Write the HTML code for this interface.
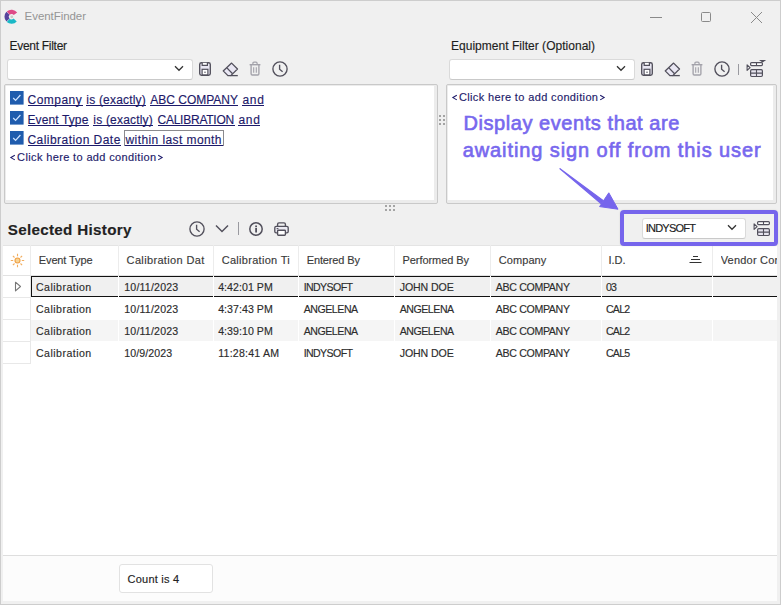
<!DOCTYPE html>
<html><head><meta charset="utf-8">
<style>
*{box-sizing:border-box;margin:0;padding:0}
html,body{width:781px;height:605px;overflow:hidden;background:#f0f0f0;font-family:"Liberation Sans",sans-serif}
.a{position:absolute;white-space:nowrap;line-height:normal}
div.a{-webkit-text-stroke:0.15px currentColor}
svg.a{overflow:visible}
</style></head><body>
<div class="a" style="left:0px;top:0px;width:781px;height:605px;background:#f0f0f0;border:1px solid #cdcdcd;"></div>
<svg class="a" style="left:2px;top:6px" width="20" height="20" viewBox="0 0 20 20"><path d="M6.22 7.06 A4.9 4.9 0 0 1 13.46 7.82" stroke="#de4a86" stroke-width="4.3" fill="none"/><path d="M5.98 7.30 A4.9 4.9 0 0 0 5.98 14.10" stroke="#56449c" stroke-width="4.3" fill="none"/><path d="M6.22 14.34 A4.9 4.9 0 0 0 13.14 13.98" stroke="#1ab8c6" stroke-width="4.3" fill="none"/><circle cx="9.8" cy="10.8" r="1.4" fill="#c9ccc5"/></svg>
<div class="a " style="left:24.60px;top:10.01px;font-size:11.5px;color:#959595;letter-spacing:-0.061px;-webkit-text-stroke:0;">EventFinder</div>
<div class="a" style="left:650px;top:17px;width:12px;height:1px;background:#8a8a8a;"></div>
<div class="a" style="left:701px;top:12px;width:10px;height:10px;border:1px solid #8a8a8a;border-radius:1.5px;"></div>
<svg class="a" style="left:750px;top:11px" width="13" height="13" viewBox="0 0 13 13"><path d="M1 1L12 12M12 1L1 12" stroke="#8a8a8a" stroke-width="1"/></svg>
<div class="a " style="left:9.50px;top:38.75px;font-size:12px;color:#1e1e1e;letter-spacing:-0.289px;">Event Filter</div>
<div class="a" style="left:7px;top:59px;width:186px;height:21px;background:#fff;border:1px solid #dadada;border-bottom-color:#c9c9c9;border-radius:3px;"></div>
<svg class="a" style="left:174px;top:65px" width="10" height="7" viewBox="0 0 10 7"><path d="M1 1.3L5 5.3L9 1.3" stroke="#333" stroke-width="1.3" fill="none"/></svg>
<svg class="a" style="left:199px;top:62px" width="12" height="14" viewBox="0 0 12 14"><rect x="0.7" y="0.7" width="10.6" height="12.6" rx="1.8" stroke="#52505c" stroke-width="1.35" fill="#e9e7f3"/>
    <path d="M3.2 0.8V3.4H8.4V0.8" stroke="#52505c" stroke-width="1.2" fill="#fff"/>
    <rect x="3.1" y="7.3" width="5.8" height="5.6" stroke="#52505c" stroke-width="1.2" fill="#fff"/>
    <rect x="5.2" y="9.7" width="1.6" height="1" fill="#52505c"/></svg>
<svg class="a" style="left:222px;top:62px" width="17" height="15" viewBox="0 0 17 15"><path d="M9.6 1.1L15.5 7L8.8 13.6H5.9L1.2 8.9z" stroke="#52505c" stroke-width="1.3" fill="#e9e7f3" stroke-linejoin="round"/>
    <path d="M4.9 5.9L10.6 11.7" stroke="#52505c" stroke-width="1.3"/>
    <path d="M8.6 13.6H15.8" stroke="#52505c" stroke-width="1.3"/></svg>
<svg class="a" style="left:249px;top:61px" width="12" height="15" viewBox="0 0 12 15"><path d="M0.6 3.7H11.4" stroke="#a3a2aa" stroke-width="1.4"/>
    <path d="M3.9 3.4V2.3Q3.9 1.2 5 1.2H7Q8.1 1.2 8.1 2.3V3.4" stroke="#a3a2aa" stroke-width="1.2" fill="none"/>
    <path d="M2.1 4V12.8Q2.1 14 3.3 14H8.7Q9.9 14 9.9 12.8V4" stroke="#a3a2aa" stroke-width="1.35" fill="none"/>
    <path d="M4.7 6.2V11.8M7.3 6.2V11.8" stroke="#a3a2aa" stroke-width="1.1"/></svg>
<svg class="a" style="left:272px;top:61px" width="16" height="16" viewBox="0 0 16 16"><circle cx="8.0" cy="8.0" r="7.1" stroke="#52505c" stroke-width="1.35" fill="none"/>
    <path d="M7.6 3.8V8.3L10.6 10.7" stroke="#52505c" stroke-width="1.35" fill="none"/></svg>
<div class="a" style="left:4px;top:84px;width:434px;height:120px;background:#ececec;border:1px solid #c9c9c9;border-radius:2px;"></div>
<div class="a" style="left:6px;top:86px;width:428px;height:114px;background:#fff;"></div>
<svg class="a" style="left:10px;top:91px" width="14" height="14" viewBox="0 0 14 14"><rect x="0" y="0" width="13.6" height="13.6" fill="#1f5cad"/><path d="M3.2 7L5.6 9.4L10.4 4" stroke="#cfe3ff" stroke-width="1.2" fill="none"/></svg>
<svg class="a" style="left:10px;top:111px" width="14" height="14" viewBox="0 0 14 14"><rect x="0" y="0" width="13.6" height="13.6" fill="#1f5cad"/><path d="M3.2 7L5.6 9.4L10.4 4" stroke="#cfe3ff" stroke-width="1.2" fill="none"/></svg>
<svg class="a" style="left:10px;top:131px" width="14" height="14" viewBox="0 0 14 14"><rect x="0" y="0" width="13.6" height="13.6" fill="#1f5cad"/><path d="M3.2 7L5.6 9.4L10.4 4" stroke="#cfe3ff" stroke-width="1.2" fill="none"/></svg>
<div class="a " style="left:27.50px;top:92.75px;font-size:12px;color:#1d1a6a;letter-spacing:0.473px;">Company</div>
<div class="a" style="left:28px;top:105px;width:55px;height:1px;background:#1d1a6a;"></div>
<div class="a " style="left:86.30px;top:92.75px;font-size:12px;color:#1d1a6a;letter-spacing:0.197px;">is (exactly)</div>
<div class="a" style="left:86px;top:105px;width:60px;height:1px;background:#1d1a6a;"></div>
<div class="a " style="left:150.30px;top:92.75px;font-size:12px;color:#1d1a6a;letter-spacing:-0.009px;">ABC COMPANY</div>
<div class="a" style="left:150px;top:105px;width:88px;height:1px;background:#1d1a6a;"></div>
<div class="a " style="left:242.50px;top:92.75px;font-size:12px;color:#1d1a6a;letter-spacing:0.642px;">and</div>
<div class="a" style="left:242px;top:105px;width:22px;height:1px;background:#1d1a6a;"></div>
<div class="a " style="left:27.50px;top:112.75px;font-size:12px;color:#1d1a6a;letter-spacing:0.109px;">Event Type</div>
<div class="a" style="left:28px;top:125px;width:61px;height:1px;background:#1d1a6a;"></div>
<div class="a " style="left:93.30px;top:112.75px;font-size:12px;color:#1d1a6a;letter-spacing:0.197px;">is (exactly)</div>
<div class="a" style="left:93px;top:125px;width:60px;height:1px;background:#1d1a6a;"></div>
<div class="a " style="left:157.50px;top:112.75px;font-size:12px;color:#1d1a6a;letter-spacing:-0.243px;">CALIBRATION</div>
<div class="a" style="left:158px;top:125px;width:77px;height:1px;background:#1d1a6a;"></div>
<div class="a " style="left:238.50px;top:112.75px;font-size:12px;color:#1d1a6a;letter-spacing:0.642px;">and</div>
<div class="a" style="left:238px;top:125px;width:22px;height:1px;background:#1d1a6a;"></div>
<div class="a " style="left:27.50px;top:132.75px;font-size:12px;color:#1d1a6a;letter-spacing:0.451px;">Calibration Date</div>
<div class="a" style="left:28px;top:145px;width:93px;height:1px;background:#1d1a6a;"></div>
<div class="a" style="left:124px;top:130px;width:100px;height:16px;border:1px solid #8a8a8e;"></div>
<div class="a" style="left:125px;top:145px;width:98px;height:1px;background:#1d1a6a;"></div>
<div class="a " style="left:125.52px;top:132.75px;font-size:12px;color:#1d1a6a;letter-spacing:0.412px;">within last month</div>
<svg class="a" style="left:9.70px;top:154.00px" width="6" height="7" viewBox="0 0 6 7"><path d="M4.8 1.3L0.9 3.6L4.8 5.9" stroke="#1d1a6a" stroke-width="1.1" fill="none"/></svg>
<div class="a " style="left:17.10px;top:150.87px;font-size:11px;color:#1d1a6a;letter-spacing:0.364px;">Click here to add condition</div>
<svg class="a" style="left:156.80px;top:154.00px" width="6" height="7" viewBox="0 0 6 7"><path d="M1.2 1.3L5.1 3.6L1.2 5.9" stroke="#1d1a6a" stroke-width="1.1" fill="none"/></svg>
<div class="a" style="left:439px;top:115px;width:2px;height:2px;background:#a4a4a4;"></div>
<div class="a" style="left:439px;top:119px;width:2px;height:2px;background:#a4a4a4;"></div>
<div class="a" style="left:439px;top:123px;width:2px;height:2px;background:#a4a4a4;"></div>
<div class="a" style="left:443px;top:115px;width:2px;height:2px;background:#a4a4a4;"></div>
<div class="a" style="left:443px;top:119px;width:2px;height:2px;background:#a4a4a4;"></div>
<div class="a" style="left:443px;top:123px;width:2px;height:2px;background:#a4a4a4;"></div>
<div class="a" style="left:385px;top:205px;width:2px;height:2px;background:#a4a4a4;"></div>
<div class="a" style="left:385px;top:209px;width:2px;height:2px;background:#a4a4a4;"></div>
<div class="a" style="left:389px;top:205px;width:2px;height:2px;background:#a4a4a4;"></div>
<div class="a" style="left:389px;top:209px;width:2px;height:2px;background:#a4a4a4;"></div>
<div class="a" style="left:393px;top:205px;width:2px;height:2px;background:#a4a4a4;"></div>
<div class="a" style="left:393px;top:209px;width:2px;height:2px;background:#a4a4a4;"></div>
<div class="a " style="left:451.00px;top:38.75px;font-size:12px;color:#1e1e1e;letter-spacing:0.024px;">Equipment Filter (Optional)</div>
<div class="a" style="left:449px;top:59px;width:186px;height:21px;background:#fff;border:1px solid #dadada;border-bottom-color:#c9c9c9;border-radius:3px;"></div>
<svg class="a" style="left:616px;top:65px" width="10" height="7" viewBox="0 0 10 7"><path d="M1 1.3L5 5.3L9 1.3" stroke="#333" stroke-width="1.3" fill="none"/></svg>
<svg class="a" style="left:641px;top:62px" width="12" height="14" viewBox="0 0 12 14"><rect x="0.7" y="0.7" width="10.6" height="12.6" rx="1.8" stroke="#52505c" stroke-width="1.35" fill="#e9e7f3"/>
    <path d="M3.2 0.8V3.4H8.4V0.8" stroke="#52505c" stroke-width="1.2" fill="#fff"/>
    <rect x="3.1" y="7.3" width="5.8" height="5.6" stroke="#52505c" stroke-width="1.2" fill="#fff"/>
    <rect x="5.2" y="9.7" width="1.6" height="1" fill="#52505c"/></svg>
<svg class="a" style="left:664px;top:62px" width="17" height="15" viewBox="0 0 17 15"><path d="M9.6 1.1L15.5 7L8.8 13.6H5.9L1.2 8.9z" stroke="#52505c" stroke-width="1.3" fill="#e9e7f3" stroke-linejoin="round"/>
    <path d="M4.9 5.9L10.6 11.7" stroke="#52505c" stroke-width="1.3"/>
    <path d="M8.6 13.6H15.8" stroke="#52505c" stroke-width="1.3"/></svg>
<svg class="a" style="left:691px;top:61px" width="12" height="15" viewBox="0 0 12 15"><path d="M0.6 3.7H11.4" stroke="#a3a2aa" stroke-width="1.4"/>
    <path d="M3.9 3.4V2.3Q3.9 1.2 5 1.2H7Q8.1 1.2 8.1 2.3V3.4" stroke="#a3a2aa" stroke-width="1.2" fill="none"/>
    <path d="M2.1 4V12.8Q2.1 14 3.3 14H8.7Q9.9 14 9.9 12.8V4" stroke="#a3a2aa" stroke-width="1.35" fill="none"/>
    <path d="M4.7 6.2V11.8M7.3 6.2V11.8" stroke="#a3a2aa" stroke-width="1.1"/></svg>
<svg class="a" style="left:714px;top:61px" width="16" height="16" viewBox="0 0 16 16"><circle cx="8.0" cy="8.0" r="7.1" stroke="#52505c" stroke-width="1.35" fill="none"/>
    <path d="M7.6 3.8V8.3L10.6 10.7" stroke="#52505c" stroke-width="1.35" fill="none"/></svg>
<div class="a" style="left:738px;top:64px;width:1px;height:11px;background:#9a9aa0;"></div>
<svg class="a" style="left:746px;top:59px" width="21" height="19" viewBox="0 0 21 19"><path d="M1.1 5.8L4.1 8.6L1.1 11.4z" stroke="#52505c" stroke-width="1.1" fill="none" stroke-linejoin="round"/>
    <rect x="4.6" y="3.6" width="11.8" height="3" rx="1" stroke="#52505c" stroke-width="1.2" fill="#fff"/>
    <path d="M10.5 3.6V6.6" stroke="#52505c" stroke-width="1.1"/>
    <rect x="4.6" y="10.7" width="11.8" height="6.8" rx="1.2" stroke="#52505c" stroke-width="1.2" fill="#e6e4ee"/>
    <path d="M4.6 14.1H16.4M10.5 10.7V17.5" stroke="#52505c" stroke-width="1.1"/><path d="M13 0.9H20.2L16.6 3.6z" fill="#52505c"/></svg>
<div class="a" style="left:446px;top:84px;width:331px;height:120px;background:#ececec;border:1px solid #c9c9c9;border-radius:2px;"></div>
<div class="a" style="left:448px;top:86px;width:325px;height:114px;background:#fff;"></div>
<svg class="a" style="left:451.50px;top:94.00px" width="6" height="7" viewBox="0 0 6 7"><path d="M4.8 1.3L0.9 3.6L4.8 5.9" stroke="#1d1a6a" stroke-width="1.1" fill="none"/></svg>
<div class="a " style="left:458.90px;top:90.87px;font-size:11px;color:#1d1a6a;letter-spacing:0.364px;">Click here to add condition</div>
<svg class="a" style="left:598.60px;top:94.00px" width="6" height="7" viewBox="0 0 6 7"><path d="M1.2 1.3L5.1 3.6L1.2 5.9" stroke="#1d1a6a" stroke-width="1.1" fill="none"/></svg>
<div class="a " style="left:463.40px;top:111.58px;font-size:20px;color:#7868ee;letter-spacing:0.571px;-webkit-text-stroke:0.65px #7868ee;">Display events that are</div>
<div class="a " style="left:462.70px;top:138.88px;font-size:20px;color:#7868ee;letter-spacing:0.911px;-webkit-text-stroke:0.65px #7868ee;">awaiting sign off from this user</div>
<svg class="a" style="left:555px;top:160px" width="70" height="55" viewBox="0 0 70 55"><path d="M5 8.7L48 40.5L46 43.5z" fill="#7665ec" stroke="#7665ec" stroke-width="1.2" stroke-linejoin="round"/>
<path d="M44.6 46.6L53.8 32.8L63 49.2z" fill="#7665ec" stroke="#7665ec" stroke-width="1" stroke-linejoin="round"/></svg>
<div class="a " style="left:7.70px;top:221.00px;font-size:15.2px;color:#222;letter-spacing:0.313px;font-weight:bold;">Selected History</div>
<svg class="a" style="left:189px;top:221px" width="16" height="16" viewBox="0 0 16 16"><circle cx="8.0" cy="8.0" r="7.1" stroke="#52505c" stroke-width="1.35" fill="none"/>
    <path d="M7.6 3.8V8.3L10.6 10.7" stroke="#52505c" stroke-width="1.35" fill="none"/></svg>
<svg class="a" style="left:215px;top:224px" width="14" height="9" viewBox="0 0 14 9"><path d="M1 1.5L7 7.5L13 1.5" stroke="#52505c" stroke-width="1.5" fill="none"/></svg>
<div class="a" style="left:238px;top:222px;width:1px;height:13px;background:#9a9aa0;"></div>
<svg class="a" style="left:249px;top:222px" width="15" height="15" viewBox="0 0 15 15"><circle cx="7" cy="7" r="6.2" stroke="#52505c" stroke-width="1.5" fill="none"/>
<rect x="6.2" y="6" width="1.8" height="4.5" fill="#52505c"/><rect x="6.2" y="3.5" width="1.8" height="1.7" fill="#52505c"/></svg>
<svg class="a" style="left:274px;top:222px" width="15" height="14" viewBox="0 0 15 14"><path d="M3.6 4.3V2.2Q3.6 0.8 5 0.8H10Q11.4 0.8 11.4 2.2V4.3" stroke="#52505c" stroke-width="1.35" fill="none"/>
<path d="M3.5 10.8H2.2Q0.8 10.8 0.8 9.4V5.8Q0.8 4.4 2.2 4.4H12.8Q14.2 4.4 14.2 5.8V9.4Q14.2 10.8 12.8 10.8H11.5" stroke="#52505c" stroke-width="1.35" fill="#ecebf3"/>
<rect x="3.6" y="8.2" width="7.8" height="5" rx="0.8" stroke="#52505c" stroke-width="1.35" fill="#fff"/>
<path d="M2.6 6.6H4.4" stroke="#52505c" stroke-width="1.1"/></svg>
<div class="a" style="left:3px;top:245px;width:774px;height:310px;background:#fff;border-top:1px solid #e4e4e4;"></div>
<div class="a" style="left:3px;top:275px;width:774px;height:1px;background:#e2e2e2;"></div>
<div class="a" style="left:30px;top:245px;width:1px;height:30px;background:#ececec;"></div>
<div class="a" style="left:118px;top:245px;width:1px;height:30px;background:#ececec;"></div>
<div class="a" style="left:213px;top:245px;width:1px;height:30px;background:#ececec;"></div>
<div class="a" style="left:298px;top:245px;width:1px;height:30px;background:#ececec;"></div>
<div class="a" style="left:394px;top:245px;width:1px;height:30px;background:#ececec;"></div>
<div class="a" style="left:490px;top:245px;width:1px;height:30px;background:#ececec;"></div>
<div class="a" style="left:601px;top:245px;width:1px;height:30px;background:#ececec;"></div>
<div class="a" style="left:712px;top:245px;width:1px;height:30px;background:#ececec;"></div>
<svg class="a" style="left:10px;top:253px" width="15" height="15" viewBox="0 0 15 15"><circle cx="7.5" cy="7.5" r="2.5" stroke="#ef9f45" stroke-width="1.1" fill="#f8d595"/>
<path d="M7.5 0.8v2.4M7.5 11.8v2.4M0.8 7.5h2.4M11.8 7.5h2.4M2.9 2.9l1.6 1.6M10.5 10.5l1.6 1.6M2.9 12.1l1.6-1.6M10.5 4.5l1.6-1.6" stroke="#f2ae60" stroke-width="1.1"/></svg>
<div class="a " style="left:38.80px;top:253.57px;font-size:11px;color:#3a3a3a;letter-spacing:-0.126px;">Event Type</div>
<div class="a " style="left:126.60px;top:253.57px;font-size:11px;color:#3a3a3a;letter-spacing:0.346px;">Calibration Dat</div>
<div class="a " style="left:221.70px;top:253.57px;font-size:11px;color:#3a3a3a;letter-spacing:0.293px;">Calibration Ti</div>
<div class="a " style="left:306.70px;top:253.57px;font-size:11px;color:#3a3a3a;letter-spacing:-0.124px;">Entered By</div>
<div class="a " style="left:402.50px;top:253.57px;font-size:11px;color:#3a3a3a;letter-spacing:-0.068px;">Performed By</div>
<div class="a " style="left:498.70px;top:253.57px;font-size:11px;color:#3a3a3a;letter-spacing:0.087px;">Company</div>
<div class="a " style="left:608.40px;top:253.57px;font-size:11px;color:#3a3a3a;">I.D.</div>
<div class="a " style="left:720.70px;top:253.57px;font-size:11px;color:#3a3a3a;letter-spacing:0.2px;width:56.80px;overflow:hidden;">Vendor Contact</div>
<svg class="a" style="left:689px;top:255px" width="13" height="9" viewBox="0 0 13 9"><path d="M4 1.5H9M2 4.5H11M0.5 7.5H12.5" stroke="#333" stroke-width="1"/></svg>
<div class="a" style="left:31px;top:277px;width:746px;height:19px;background:#f0f0f0;"></div>
<div class="a" style="left:3px;top:320px;width:774px;height:21px;background:#f5f5f5;"></div>
<div class="a" style="left:31px;top:276px;width:746px;height:1px;background:#111;"></div>
<div class="a" style="left:31px;top:296px;width:746px;height:1px;background:#111;"></div>
<div class="a" style="left:31px;top:276px;width:1px;height:21px;background:#111;"></div>
<div class="a" style="left:118px;top:276px;width:1px;height:21px;background:#fff;"></div>
<div class="a" style="left:213px;top:276px;width:1px;height:21px;background:#fff;"></div>
<div class="a" style="left:298px;top:276px;width:1px;height:21px;background:#fff;"></div>
<div class="a" style="left:394px;top:276px;width:1px;height:21px;background:#fff;"></div>
<div class="a" style="left:490px;top:276px;width:1px;height:21px;background:#fff;"></div>
<div class="a" style="left:601px;top:276px;width:1px;height:21px;background:#fff;"></div>
<div class="a" style="left:712px;top:276px;width:1px;height:21px;background:#fff;"></div>
<div class="a" style="left:3px;top:297px;width:28px;height:1px;background:#e8e8e8;"></div>
<div class="a" style="left:3px;top:319px;width:28px;height:1px;background:#e8e8e8;"></div>
<div class="a" style="left:3px;top:341px;width:28px;height:1px;background:#e8e8e8;"></div>
<div class="a" style="left:3px;top:363px;width:28px;height:1px;background:#e8e8e8;"></div>
<div class="a" style="left:30px;top:276px;width:1px;height:87px;background:#e8e8e8;"></div>
<div class="a" style="left:3px;top:320px;width:27px;height:21px;background:#fff;"></div>
<div class="a" style="left:118px;top:320px;width:1px;height:21px;background:#fff;"></div>
<div class="a" style="left:213px;top:320px;width:1px;height:21px;background:#fff;"></div>
<div class="a" style="left:298px;top:320px;width:1px;height:21px;background:#fff;"></div>
<div class="a" style="left:394px;top:320px;width:1px;height:21px;background:#fff;"></div>
<div class="a" style="left:490px;top:320px;width:1px;height:21px;background:#fff;"></div>
<div class="a" style="left:601px;top:320px;width:1px;height:21px;background:#fff;"></div>
<div class="a" style="left:712px;top:320px;width:1px;height:21px;background:#fff;"></div>
<svg class="a" style="left:14px;top:281px" width="8" height="11" viewBox="0 0 8 11"><path d="M1.5 1.2L6.5 5.5L1.5 9.8z" stroke="#777" stroke-width="1.1" fill="none" stroke-linejoin="round"/></svg>
<div class="a " style="left:35.90px;top:280.84px;font-size:10.6px;color:#2c2c2c;letter-spacing:0.473px;">Calibration</div>
<div class="a " style="left:124.20px;top:280.84px;font-size:10.6px;color:#2c2c2c;letter-spacing:0.203px;">10/11/2023</div>
<div class="a " style="left:218.20px;top:280.84px;font-size:10.6px;color:#2c2c2c;letter-spacing:0.044px;">4:42:01 PM</div>
<div class="a " style="left:303.70px;top:280.84px;font-size:10.6px;color:#2c2c2c;letter-spacing:-0.613px;">INDYSOFT</div>
<div class="a " style="left:399.70px;top:280.84px;font-size:10.6px;color:#2c2c2c;letter-spacing:-0.096px;">JOHN DOE</div>
<div class="a " style="left:495.80px;top:280.84px;font-size:10.6px;color:#2c2c2c;letter-spacing:-0.335px;">ABC COMPANY</div>
<div class="a " style="left:605.90px;top:280.84px;font-size:10.6px;color:#2c2c2c;letter-spacing:-0.787px;">03</div>
<div class="a " style="left:35.90px;top:303.24px;font-size:10.6px;color:#2c2c2c;letter-spacing:0.473px;">Calibration</div>
<div class="a " style="left:124.20px;top:303.24px;font-size:10.6px;color:#2c2c2c;letter-spacing:0.203px;">10/11/2023</div>
<div class="a " style="left:218.20px;top:303.24px;font-size:10.6px;color:#2c2c2c;letter-spacing:0.044px;">4:37:43 PM</div>
<div class="a " style="left:303.70px;top:303.24px;font-size:10.6px;color:#2c2c2c;letter-spacing:-0.461px;">ANGELENA</div>
<div class="a " style="left:399.70px;top:303.24px;font-size:10.6px;color:#2c2c2c;letter-spacing:-0.461px;">ANGELENA</div>
<div class="a " style="left:495.80px;top:303.24px;font-size:10.6px;color:#2c2c2c;letter-spacing:-0.335px;">ABC COMPANY</div>
<div class="a " style="left:605.90px;top:303.24px;font-size:10.6px;color:#2c2c2c;letter-spacing:-0.737px;">CAL2</div>
<div class="a " style="left:35.90px;top:325.24px;font-size:10.6px;color:#2c2c2c;letter-spacing:0.473px;">Calibration</div>
<div class="a " style="left:124.20px;top:325.24px;font-size:10.6px;color:#2c2c2c;letter-spacing:0.203px;">10/11/2023</div>
<div class="a " style="left:218.20px;top:325.24px;font-size:10.6px;color:#2c2c2c;letter-spacing:0.044px;">4:39:10 PM</div>
<div class="a " style="left:303.70px;top:325.24px;font-size:10.6px;color:#2c2c2c;letter-spacing:-0.461px;">ANGELENA</div>
<div class="a " style="left:399.70px;top:325.24px;font-size:10.6px;color:#2c2c2c;letter-spacing:-0.461px;">ANGELENA</div>
<div class="a " style="left:495.80px;top:325.24px;font-size:10.6px;color:#2c2c2c;letter-spacing:-0.335px;">ABC COMPANY</div>
<div class="a " style="left:605.90px;top:325.24px;font-size:10.6px;color:#2c2c2c;letter-spacing:-0.737px;">CAL2</div>
<div class="a " style="left:35.90px;top:347.24px;font-size:10.6px;color:#2c2c2c;letter-spacing:0.473px;">Calibration</div>
<div class="a " style="left:124.20px;top:347.24px;font-size:10.6px;color:#2c2c2c;letter-spacing:0.093px;">10/9/2023</div>
<div class="a " style="left:218.20px;top:347.24px;font-size:10.6px;color:#2c2c2c;letter-spacing:0.227px;">11:28:41 AM</div>
<div class="a " style="left:303.70px;top:347.24px;font-size:10.6px;color:#2c2c2c;letter-spacing:-0.613px;">INDYSOFT</div>
<div class="a " style="left:399.70px;top:347.24px;font-size:10.6px;color:#2c2c2c;letter-spacing:-0.096px;">JOHN DOE</div>
<div class="a " style="left:495.80px;top:347.24px;font-size:10.6px;color:#2c2c2c;letter-spacing:-0.335px;">ABC COMPANY</div>
<div class="a " style="left:605.90px;top:347.24px;font-size:10.6px;color:#2c2c2c;letter-spacing:-0.737px;">CAL5</div>
<div class="a" style="left:3px;top:555px;width:774px;height:1px;background:#dedede;"></div>
<div class="a" style="left:3px;top:556px;width:774px;height:45px;background:#fcfcfc;"></div>
<div class="a" style="left:119px;top:564px;width:94px;height:29px;background:#fff;border:1px solid #e2e2e2;border-radius:3px;"></div>
<div class="a " style="left:127.50px;top:572.87px;font-size:11px;color:#222;letter-spacing:0.242px;">Count is 4</div>
<div class="a" style="left:620px;top:210px;width:158px;height:36px;border:4px solid #7665ec;border-radius:4px;box-shadow:0 0 2px rgba(60,60,0,0.12);"></div>
<div class="a" style="left:642px;top:218px;width:104px;height:21px;background:#fff;border:1px solid #dadada;border-bottom-color:#c9c9c9;border-radius:3px;"></div>
<svg class="a" style="left:727px;top:224px" width="10" height="7" viewBox="0 0 10 7"><path d="M1 1.3L5 5.3L9 1.3" stroke="#333" stroke-width="1.3" fill="none"/></svg>
<div class="a " style="left:645.70px;top:221.57px;font-size:11px;color:#222;letter-spacing:-0.759px;">INDYSOFT</div>
<svg class="a" style="left:753px;top:218px" width="21" height="19" viewBox="0 0 21 19"><path d="M1.1 5.8L4.1 8.6L1.1 11.4z" stroke="#52505c" stroke-width="1.1" fill="none" stroke-linejoin="round"/>
    <rect x="4.6" y="3.6" width="11.8" height="3" rx="1" stroke="#52505c" stroke-width="1.2" fill="#fff"/>
    <path d="M10.5 3.6V6.6" stroke="#52505c" stroke-width="1.1"/>
    <rect x="4.6" y="10.7" width="11.8" height="6.8" rx="1.2" stroke="#52505c" stroke-width="1.2" fill="#e6e4ee"/>
    <path d="M4.6 14.1H16.4M10.5 10.7V17.5" stroke="#52505c" stroke-width="1.1"/></svg>
</body></html>
